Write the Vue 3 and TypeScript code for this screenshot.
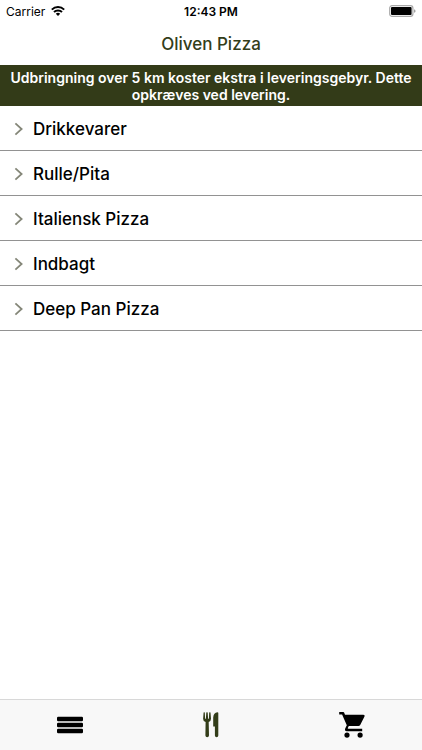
<script setup lang="ts">
import { ref } from 'vue'

interface Category {
  id: number
  name: string
}

const categories: Category[] = [
  { id: 1, name: 'Drikkevarer' },
  { id: 2, name: 'Rulle/Pita' },
  { id: 3, name: 'Italiensk Pizza' },
  { id: 4, name: 'Indbagt' },
  { id: 5, name: 'Deep Pan Pizza' },
]

type Tab = 'list' | 'menu' | 'cart'
const activeTab = ref<Tab>('menu')
</script>

<template>
  <div class="screen">
    <div class="status">
      <div class="carrier">
        <span>Carrier</span>
        <svg class="wifi" viewBox="0 0 14 10" aria-hidden="true">
          <path d="M0.8 3.6A9 9 0 0 1 13.2 3.6" />
          <path d="M3 6A5.8 5.8 0 0 1 11 6" />
          <path class="dot" d="M4.8 7.7A3.2 3.2 0 0 1 9.2 7.7L7 10Z" />
        </svg>
      </div>
      <span class="time">12:43 PM</span>
      <div class="power">
        <svg class="battery" viewBox="0 0 27 12" aria-hidden="true">
          <rect x="0.7" y="0.7" width="23.2" height="10.6" rx="2.4" fill="#fff" stroke="#a9a9a9" stroke-width="1.2" />
          <rect x="2" y="2" width="20.6" height="8" rx="1" fill="#000" />
          <path d="M25 4.2Q26.6 4.6 26.6 6T25 7.8Z" fill="#a0a0a0" />
        </svg>
      </div>
    </div>

    <header class="header">
      <h1>Oliven Pizza</h1>
    </header>

    <p class="notice">Udbringning over 5 km koster ekstra i leveringsgebyr. Dette opkræves ved levering.</p>

    <main class="content">
      <ul class="categories">
        <li v-for="category in categories" :key="category.id">
          <button type="button" class="category">
            <svg class="chevron" viewBox="0 0 10 14" aria-hidden="true">
              <path d="M1.4 1.4L7.6 7L1.4 12.6" />
            </svg>
            <span>{{ category.name }}</span>
          </button>
        </li>
      </ul>
    </main>

    <nav class="tabs">
      <button type="button" class="tab" :class="{ active: activeTab === 'list' }" @click="activeTab = 'list'">
        <svg viewBox="0 0 30 30" aria-hidden="true">
          <rect x="2" y="6.8" width="26" height="4.4" rx="1.2" />
          <rect x="2" y="12.8" width="26" height="4.4" rx="1.2" />
          <rect x="2" y="18.8" width="26" height="4.4" rx="1.2" />
        </svg>
      </button>
      <button type="button" class="tab" :class="{ active: activeTab === 'menu' }" @click="activeTab = 'menu'">
        <svg viewBox="0 0 30 30" aria-hidden="true">
          <path d="M7.6 2.6Q8.3 2 8.8 2.6L9.1 8.6Q9.5 9.2 9.9 8.6L10.3 2.6Q11 2 11.7 2.6L12.1 8.6Q12.5 9.2 12.9 8.6L13.2 2.6Q13.8 2 14.5 2.6L15 8.8Q15 11.2 12.7 12L13 25.6Q12.9 27.2 11.2 27.2T9.4 25.6L9.6 12Q7 11.2 7.1 8.8Z" />
          <path d="M22.3 3V25.6Q22.2 27.2 20.6 27.2T18.9 25.6V16.6H17.2V7.5Q17.6 2.4 21.4 2.2Q22.3 2.2 22.3 3Z" />
        </svg>
      </button>
      <button type="button" class="tab" :class="{ active: activeTab === 'cart' }" @click="activeTab = 'cart'">
        <svg viewBox="0 0 30 30" aria-hidden="true">
          <path d="M2.2 2H6.3Q6.9 2 7.1 2.6L8 4.8H26.4Q28.2 4.9 27.5 6.6L23.2 15Q22.6 16.1 21.4 16.1H11.8L10.8 18Q10.6 18.7 11.3 18.7H25.2V21.2H9.8Q7.3 21 8.2 18.4L9.8 15.3L5.1 4.6H2.2Z" />
          <circle cx="10" cy="25.1" r="2.6" />
          <circle cx="23.1" cy="25.1" r="2.6" />
        </svg>
      </button>
    </nav>
  </div>
</template>

<style>
body {
  margin: 0;
  background: #fff;
}
</style>

<style scoped>
.screen {
  display: flex;
  flex-direction: column;
  min-height: 100vh;
  background: #fff;
  color: #000;
  font-family: Inter, "Liberation Sans", sans-serif;
}

.status {
  display: grid;
  grid-template-columns: 1fr auto 1fr;
  align-items: center;
  height: 22px;
  padding: 0 6px;
  font-size: 12px;
}

.carrier {
  display: flex;
  align-items: center;
  gap: 6px;
}

.wifi {
  width: 14px;
  height: 10px;
  fill: none;
  stroke: #000;
  stroke-width: 2;
}

.wifi .dot {
  fill: #000;
  stroke: none;
}

.time {
  font-weight: 600;
}

.power {
  display: flex;
  justify-content: flex-end;
}

.battery {
  width: 27px;
  height: 12px;
}

.header {
  display: flex;
  align-items: center;
  justify-content: center;
  height: 43px;
}

h1 {
  margin: 0;
  color: #333d19;
  font-size: 17px;
  font-weight: 500;
}

.notice {
  margin: 0;
  padding: 4px 6px 3px;
  background: #333b18;
  color: #fff;
  font-size: 14px;
  font-weight: 600;
  line-height: 17px;
  text-align: center;
}

.content {
  flex: 1;
}

.categories {
  margin: 0;
  padding: 0;
  list-style: none;
}

.category {
  display: flex;
  align-items: center;
  gap: 9px;
  width: 100%;
  height: 45px;
  padding: 1px 14px 0;
  border: 0;
  border-bottom: 1px solid #929292;
  background: none;
  color: #000;
  font: inherit;
  font-size: 17px;
  font-weight: 500;
  text-align: left;
}

.chevron {
  width: 10px;
  height: 14px;
  fill: none;
  stroke: #858779;
  stroke-width: 1.8;
}

.tabs {
  display: flex;
  height: 50px;
  border-top: 1px solid #d8d8d8;
  background: #f8f8f8;
}

.tab {
  display: flex;
  flex: 1;
  align-items: center;
  justify-content: center;
  padding: 0;
  border: 0;
  background: none;
  color: #000;
}

.tab.active {
  color: #333d19;
}

.tab svg {
  width: 30px;
  height: 30px;
  fill: currentColor;
}
</style>
